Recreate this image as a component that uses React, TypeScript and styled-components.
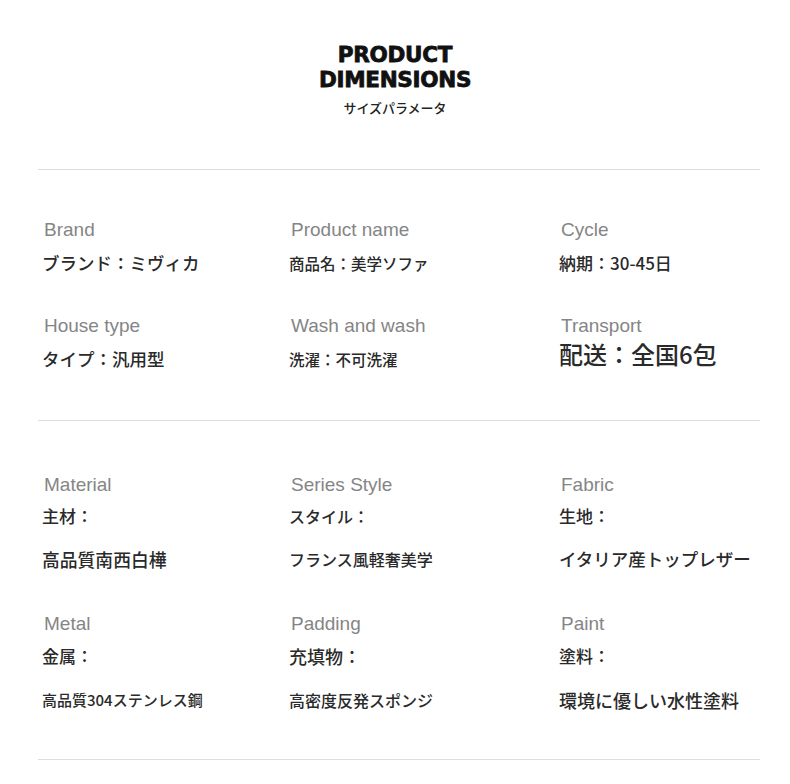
import * as React from "react";
import styled, { createGlobalStyle } from "styled-components";

const GlobalStyle = createGlobalStyle`
  html, body {
    margin: 0;
    padding: 0;
    background: #ffffff;
  }
  body {
    font-family: "Noto Sans CJK JP", "Liberation Sans", sans-serif;
    color: #262626;
  }
`;

interface SpecValue {
  text: string;
  size: number;
  gap: number;
}

interface SpecItem {
  label: string;
  values: SpecValue[];
}

interface SectionData {
  padTop: number;
  padBottom: number;
  rowGap: number;
  items: SpecItem[];
}

const sections: SectionData[] = [
  {
    padTop: 49,
    padBottom: 45,
    rowGap: 36,
    items: [
      { label: "Brand", values: [{ text: "ブランド：ミヴィカ", size: 17.5, gap: 6 }] },
      { label: "Product name", values: [{ text: "商品名：美学ソファ", size: 15.5, gap: 6 }] },
      { label: "Cycle", values: [{ text: "納期：30-45日", size: 17, gap: 6 }] },
      { label: "House type", values: [{ text: "タイプ：汎用型", size: 17.5, gap: 6 }] },
      { label: "Wash and wash", values: [{ text: "洗濯：不可洗濯", size: 15.5, gap: 6 }] },
      { label: "Transport", values: [{ text: "配送：全国6包", size: 24, gap: 1 }] },
    ],
  },
  {
    padTop: 53,
    padBottom: 43,
    rowGap: 38,
    items: [
      {
        label: "Material",
        values: [
          { text: "主材：", size: 17, gap: 4 },
          { text: "高品質南西白樺", size: 17.8, gap: 11 },
        ],
      },
      {
        label: "Series Style",
        values: [
          { text: "スタイル：", size: 16, gap: 4 },
          { text: "フランス風軽奢美学", size: 16, gap: 11 },
        ],
      },
      {
        label: "Fabric",
        values: [
          { text: "生地：", size: 17, gap: 4 },
          { text: "イタリア産トップレザー", size: 17.5, gap: 11 },
        ],
      },
      {
        label: "Metal",
        values: [
          { text: "金属：", size: 17, gap: 5 },
          { text: "高品質304ステンレス鋼", size: 15, gap: 12 },
        ],
      },
      {
        label: "Padding",
        values: [
          { text: "充填物：", size: 18, gap: 5 },
          { text: "高密度反発スポンジ", size: 16, gap: 12 },
        ],
      },
      {
        label: "Paint",
        values: [
          { text: "塗料：", size: 17, gap: 5 },
          { text: "環境に優しい水性塗料", size: 18, gap: 12 },
        ],
      },
    ],
  },
];

const Page = styled.div`
  width: 790px;
  min-height: 784px;
  background: #ffffff;
`;

const Header = styled.header`
  display: flex;
  flex-direction: column;
  align-items: center;
  padding: 42px 0 52px;
`;

const Title = styled.h1`
  margin: 0;
  font-family: "DejaVu Sans", "Liberation Sans", sans-serif;
  font-weight: 700;
  font-size: 21.5px;
  line-height: 25px;
  letter-spacing: -0.3px;
  color: #111111;
  text-align: center;
  -webkit-text-stroke: 0.8px #111111;
`;

const Subtitle = styled.div`
  margin-top: 7px;
  font-size: 13px;
  line-height: 18px;
  font-weight: 500;
  color: #222222;
`;

const Content = styled.main`
  margin: 0 30px 0 38px;
`;

const Divider = styled.hr`
  margin: 0;
  border: none;
  height: 1px;
  background: #dedede;
`;

const Grid = styled.section<{ $padTop: number; $padBottom: number; $rowGap: number }>`
  display: grid;
  grid-template-columns: 247px 270px 1fr;
  row-gap: ${(p) => p.$rowGap}px;
  padding: ${(p) => p.$padTop}px 0 ${(p) => p.$padBottom}px 4px;
`;

const Cell = styled.div`
  display: flex;
  flex-direction: column;
  align-items: flex-start;
`;

const Label = styled.div`
  padding-left: 2px;
  font-family: "Liberation Sans", Arial, sans-serif;
  font-size: 19px;
  line-height: 22px;
  color: #858585;
  white-space: nowrap;
`;

const Value = styled.div<{ $size: number; $gap: number }>`
  margin-top: ${(p) => p.$gap}px;
  font-size: ${(p) => p.$size}px;
  line-height: 32px;
  font-weight: 500;
  color: #2a2a2a;
  white-space: nowrap;
`;

export default function App() {
  return (
    <Page>
      <GlobalStyle />
      <Header>
        <Title>
          PRODUCT
          <br />
          DIMENSIONS
        </Title>
        <Subtitle>サイズパラメータ</Subtitle>
      </Header>
      <Content>
        {sections.map((section, i) => (
          <React.Fragment key={i}>
            <Divider />
            <Grid $padTop={section.padTop} $padBottom={section.padBottom} $rowGap={section.rowGap}>
              {section.items.map((item) => (
                <Cell key={item.label}>
                  <Label>{item.label}</Label>
                  {item.values.map((v) => (
                    <Value key={v.text} $size={v.size} $gap={v.gap}>
                      {v.text}
                    </Value>
                  ))}
                </Cell>
              ))}
            </Grid>
          </React.Fragment>
        ))}
        <Divider />
      </Content>
    </Page>
  );
}
